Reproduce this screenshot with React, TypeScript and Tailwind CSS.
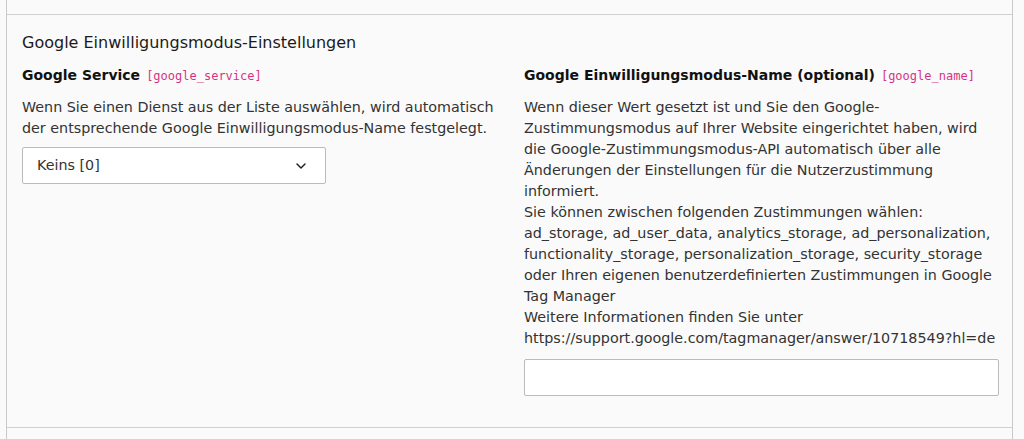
import { ChevronDown } from "lucide-react";

const sans = { fontFamily: '"DejaVu Sans", Verdana, sans-serif' };

function Label({ title, field }: { title: string; field: string }) {
  return (
    <div className="flex items-baseline gap-[6px] leading-[21px]">
      <span className="text-[14px] font-bold text-[#111]">{title}</span>
      <code className="font-['DejaVu_Sans_Mono',monospace] text-[12px] text-[#d63384]">[{field}]</code>
    </div>
  );
}

export default function App() {
  return (
    <div className="min-h-[439px] bg-[#fafafa] pl-[6px] pr-[11px]" style={sans}>
      <div className="border-x border-[#c9c9c9]">
        <div className="h-[14px]" />
        <section className="border-y border-[#d0d0d0] pl-[15px] pr-[13px] pt-[16px] pb-[31px]">
          <h2 className="text-[16px] leading-[24px] text-[#1a1a1a]">Google Einwilligungsmodus-Einstellungen</h2>
          <div className="mt-[10px] flex gap-[26px]">
            <div className="w-[476px] shrink-0">
              <Label title="Google Service" field="google_service" />
              <p className="mt-[10px] text-[14.3px] leading-[21px] text-[#333]">
                Wenn Sie einen Dienst aus der Liste auswählen, wird automatisch der entsprechende Google Einwilligungsmodus-Name festgelegt.
              </p>
              <div className="mt-[8px] flex h-[37px] w-[304px] items-center justify-between rounded-[2px] border border-[#bbb] bg-white pl-[14px] pr-[16px]">
                <span className="text-[14.3px] text-[#333]">Keins [0]</span>
                <ChevronDown size={16} strokeWidth={2.2} className="text-[#222]" />
              </div>
            </div>
            <div className="w-[475px] shrink-0">
              <Label title="Google Einwilligungsmodus-Name (optional)" field="google_name" />
              <p className="mt-[10px] text-[14.3px] leading-[21px] text-[#333]">
                Wenn dieser Wert gesetzt ist und Sie den Google-Zustimmungsmodus auf Ihrer Website eingerichtet haben, wird die Google-Zustimmungsmodus-API automatisch über alle Änderungen der Einstellungen für die Nutzerzustimmung informiert.
                <br />
                Sie können zwischen folgenden Zustimmungen wählen: ad_storage, ad_user_data, analytics_storage, ad_personalization, functionality_storage, personalization_storage, security_storage oder Ihren eigenen benutzerdefinierten Zustimmungen in Google Tag Manager
                <br />
                Weitere Informationen finden Sie unter https://support.google.com/tagmanager/answer/10718549?hl=de
              </p>
              <div className="mt-[10px] h-[37px] w-[475px] rounded-[2px] border border-[#bbb] bg-white" />
            </div>
          </div>
        </section>
        <div className="h-[12px]" />
      </div>
    </div>
  );
}
